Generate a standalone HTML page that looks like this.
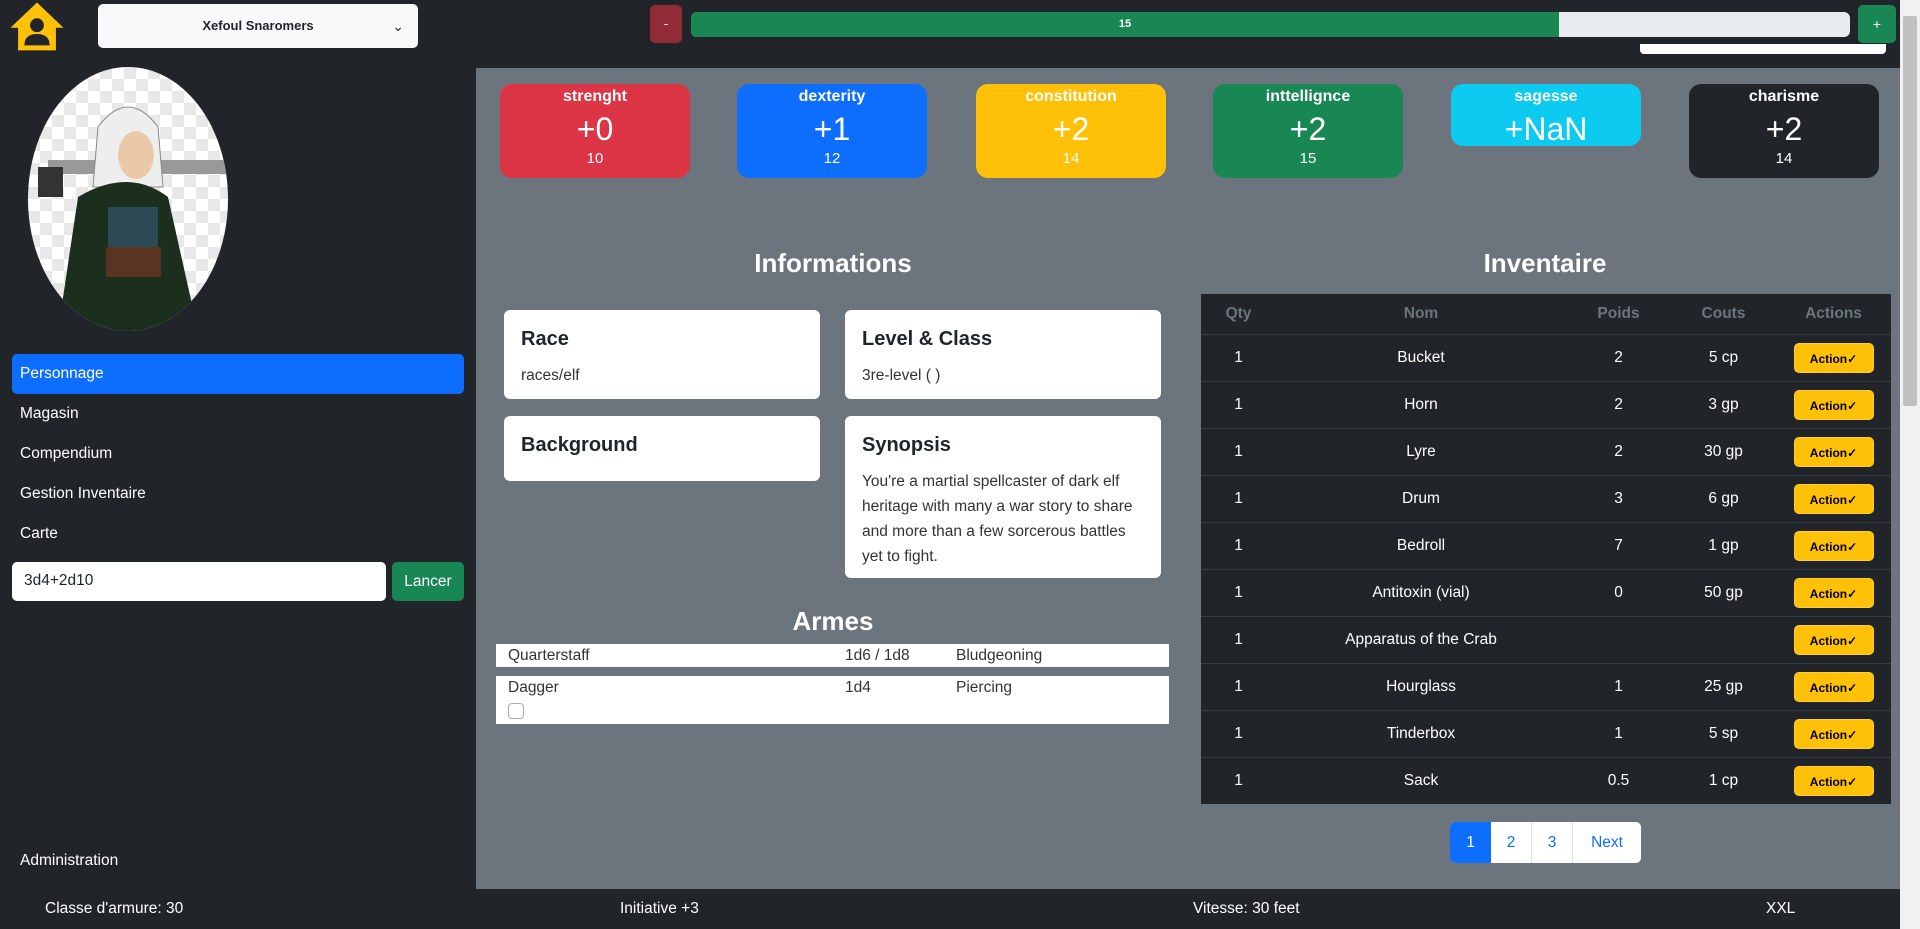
<!DOCTYPE html>
<html><head><meta charset="utf-8"><style>
*{box-sizing:border-box;margin:0;padding:0}
body{width:1920px;height:929px;overflow:hidden;background:#212529;font-family:"Liberation Sans",sans-serif;color:#fff;position:relative;font-size:16px}
.a{position:absolute}
.stat{position:absolute;top:84px;width:190px;height:94px;border-radius:12px;text-align:center}
.stat .n{font-weight:bold;font-size:16px;margin-top:4px}
.stat .v{font-size:32px;line-height:42px;margin-top:2px}
.stat .s{font-size:15px;margin-top:0}
.card{position:absolute;background:#fff;border-radius:6px;color:#212529;padding:18px 17px}
.card h5{font-size:20px;font-weight:bold;margin-bottom:12px;color:#212529}
.card p{font-size:15.5px;line-height:25px;color:#333}
h3{position:absolute;font-size:26px;font-weight:bold;text-align:center}
.nav{position:absolute;left:20px;font-size:15.5px}
table{border-collapse:collapse;width:100%}
.inv td,.inv th{height:47px;text-align:center;font-size:15.5px;border-top:1px solid #373b3e}
.inv th{color:#6c757d;font-weight:bold;height:40px;border:none}
.btn{display:inline-block;background:#ffc107;color:#000;border:1px solid #fff3;border-radius:5px;width:80px;height:30px;line-height:30px;font-size:12px;font-weight:bold}
.wrow{position:absolute;left:496px;width:673px;background:#fff;color:#333;font-size:15.5px}
.wrow span{position:absolute;top:3px}
</style></head><body>
<svg class="a" style="left:8px;top:0px" width="58" height="58" viewBox="0 0 46 46"><path d="M23 2 L44 22 H38 V40 H8 V22 H2 Z" fill="#ffc107"/><circle cx="23" cy="20" r="5.5" fill="#212529"/><path d="M13 36 Q13 27 23 27 Q33 27 33 36 Z" fill="#212529"/></svg>
<div class="a" style="left:98px;top:4px;width:320px;height:44px;background:#f8f9fa;border-radius:5px;color:#212529;font-size:13px;font-weight:bold;text-align:center;line-height:44px">Xefoul Snaromers<span style="position:absolute;right:14px;top:0;font-weight:normal;font-size:14px">&#8964;</span></div>
<div class="a" style="left:650px;top:5px;width:32px;height:38px;background:#922b38;border-radius:5px;text-align:center;line-height:38px;font-size:13px">-</div>
<div class="a" style="left:691px;top:12px;width:1159px;height:25px;background:#e9ecef;border-radius:6px;overflow:hidden"><div style="width:868px;height:25px;background:#198754;text-align:center;line-height:25px;font-size:11px;font-weight:bold">15</div></div>
<div class="a" style="left:1858px;top:5px;width:38px;height:38px;background:#198754;border-radius:5px;text-align:center;line-height:38px;font-size:14px">+</div>
<div class="a" style="left:1640px;top:44px;width:246px;height:10px;background:#fff;border-radius:0 0 4px 4px"></div>
<div class="a" style="left:476px;top:68px;width:1424px;height:821px;background:#6c757d"></div>
<div class="a" style="left:1900px;top:0;width:20px;height:929px;background:#f1f1f1"><div style="margin:16px 3px;height:390px;background:#c1c1c1;border-radius:2px"></div></div>
<svg class="a" style="left:28px;top:67px" width="200" height="264" viewBox="0 0 200 264"><defs><clipPath id="c"><ellipse cx="100" cy="132" rx="100" ry="132"/></clipPath><pattern id="p" width="24" height="24" patternUnits="userSpaceOnUse"><rect width="24" height="24" fill="#fff"/><rect width="12" height="12" fill="#e8e8e8"/><rect x="12" y="12" width="12" height="12" fill="#e8e8e8"/></pattern></defs><g clip-path="url(#c)"><rect width="200" height="264" fill="url(#p)"/><rect x="20" y="93" width="180" height="14" fill="#999"/><path d="M70 60 Q100 20 130 60 L135 120 L65 120 Z" fill="#eee" stroke="#888"/><ellipse cx="108" cy="88" rx="18" ry="24" fill="#e9c9a8"/><path d="M50 130 Q100 100 140 130 L170 264 L30 264 Z" fill="#1c2e1e"/><rect x="80" y="140" width="50" height="60" fill="#2b4a55"/><rect x="78" y="180" width="55" height="30" fill="#5a3422"/><rect x="10" y="100" width="25" height="30" fill="#333"/></g></svg>
<div class="a" style="left:12px;top:354px;width:452px;height:40px;background:#0d6efd;border-radius:5px"></div>
<div class="nav" style="top:365px">Personnage</div>
<div class="nav" style="top:405px">Magasin</div>
<div class="nav" style="top:445px">Compendium</div>
<div class="nav" style="top:485px">Gestion Inventaire</div>
<div class="nav" style="top:525px">Carte</div>
<div class="a" style="left:12px;top:562px;width:374px;height:39px;background:#fff;border-radius:5px;color:#212529;padding:10px 12px;font-size:15.5px">3d4+2d10</div>
<div class="a" style="left:392px;top:562px;width:72px;height:39px;background:#198754;border-radius:5px;text-align:center;line-height:39px;font-size:15.5px">Lancer</div>
<div class="nav" style="top:852px">Administration</div>
<div class="stat" style="left:500px;background:#dc3545"><div class="n">strenght</div><div class="v">+0</div><div class="s">10</div></div>
<div class="stat" style="left:737px;background:#0d6efd"><div class="n">dexterity</div><div class="v">+1</div><div class="s">12</div></div>
<div class="stat" style="left:976px;background:#ffc107"><div class="n">constitution</div><div class="v">+2</div><div class="s">14</div></div>
<div class="stat" style="left:1213px;background:#198754"><div class="n">inttellignce</div><div class="v">+2</div><div class="s">15</div></div>
<div class="stat" style="left:1451px;background:#0dcaf0;height:62px"><div class="n">sagesse</div><div class="v">+NaN</div></div>
<div class="stat" style="left:1689px;background:#212529"><div class="n">charisme</div><div class="v">+2</div><div class="s">14</div></div>
<h3 style="left:633px;width:400px;top:248px">Informations</h3>
<div class="card" style="left:504px;top:310px;width:316px;height:89px"><h5>Race</h5><p>races/elf</p></div>
<div class="card" style="left:845px;top:310px;width:316px;height:89px"><h5>Level &amp; Class</h5><p>3re-level ( )</p></div>
<div class="card" style="left:504px;top:416px;width:316px;height:65px"><h5>Background</h5></div>
<div class="card" style="left:845px;top:416px;width:316px;height:162px"><h5>Synopsis</h5><p>You're a martial spellcaster of dark elf heritage with many a war story to share and more than a few sorcerous battles yet to fight.</p></div>
<h3 style="left:633px;width:400px;top:606px">Armes</h3>
<div class="wrow" style="top:644px;height:23px"><span style="left:12px">Quarterstaff</span><span style="left:349px">1d6 / 1d8</span><span style="left:460px">Bludgeoning</span></div>
<div class="wrow" style="top:676px;height:48px"><span style="left:12px">Dagger</span><span style="left:349px">1d4</span><span style="left:460px">Piercing</span><div style="position:absolute;left:12px;top:27px;width:16px;height:16px;border:1px solid #aaa;border-radius:4px"></div></div>
<h3 style="left:1345px;width:400px;top:248px">Inventaire</h3>
<div class="a" style="left:1201px;top:294px;width:690px;height:510px;background:#212529">
<table class="inv"><tr><th style="width:75px">Qty</th><th style="width:290px">Nom</th><th style="width:105px">Poids</th><th style="width:105px">Couts</th><th>Actions</th></tr>
<tr><td>1</td><td>Bucket</td><td>2</td><td>5 cp</td><td><span class="btn">Action&#10003;</span></td></tr>
<tr><td>1</td><td>Horn</td><td>2</td><td>3 gp</td><td><span class="btn">Action&#10003;</span></td></tr>
<tr><td>1</td><td>Lyre</td><td>2</td><td>30 gp</td><td><span class="btn">Action&#10003;</span></td></tr>
<tr><td>1</td><td>Drum</td><td>3</td><td>6 gp</td><td><span class="btn">Action&#10003;</span></td></tr>
<tr><td>1</td><td>Bedroll</td><td>7</td><td>1 gp</td><td><span class="btn">Action&#10003;</span></td></tr>
<tr><td>1</td><td>Antitoxin (vial)</td><td>0</td><td>50 gp</td><td><span class="btn">Action&#10003;</span></td></tr>
<tr><td>1</td><td>Apparatus of the Crab</td><td></td><td></td><td><span class="btn">Action&#10003;</span></td></tr>
<tr><td>1</td><td>Hourglass</td><td>1</td><td>25 gp</td><td><span class="btn">Action&#10003;</span></td></tr>
<tr><td>1</td><td>Tinderbox</td><td>1</td><td>5 sp</td><td><span class="btn">Action&#10003;</span></td></tr>
<tr><td>1</td><td>Sack</td><td>0.5</td><td>1 cp</td><td><span class="btn">Action&#10003;</span></td></tr>
</table></div>
<div class="a" style="left:1450px;top:822px;width:191px;height:41px;background:#fff;border-radius:5px;display:flex;font-size:15.5px;color:#0d6efd;line-height:41px;overflow:hidden">
<div style="width:41px;background:#0d6efd;color:#fff;text-align:center">1</div><div style="width:41px;text-align:center;border-right:1px solid #dee2e6">2</div><div style="width:41px;text-align:center;border-right:1px solid #dee2e6">3</div><div style="flex:1;text-align:center">Next</div></div>
<div class="a" style="left:45px;top:900px;font-size:15.5px">Classe d'armure: 30</div>
<div class="a" style="left:620px;top:900px;font-size:15.5px">Initiative +3</div>
<div class="a" style="left:1193px;top:900px;font-size:15.5px">Vitesse: 30 feet</div>
<div class="a" style="left:1766px;top:900px;font-size:15.5px">XXL</div>
</body></html>
